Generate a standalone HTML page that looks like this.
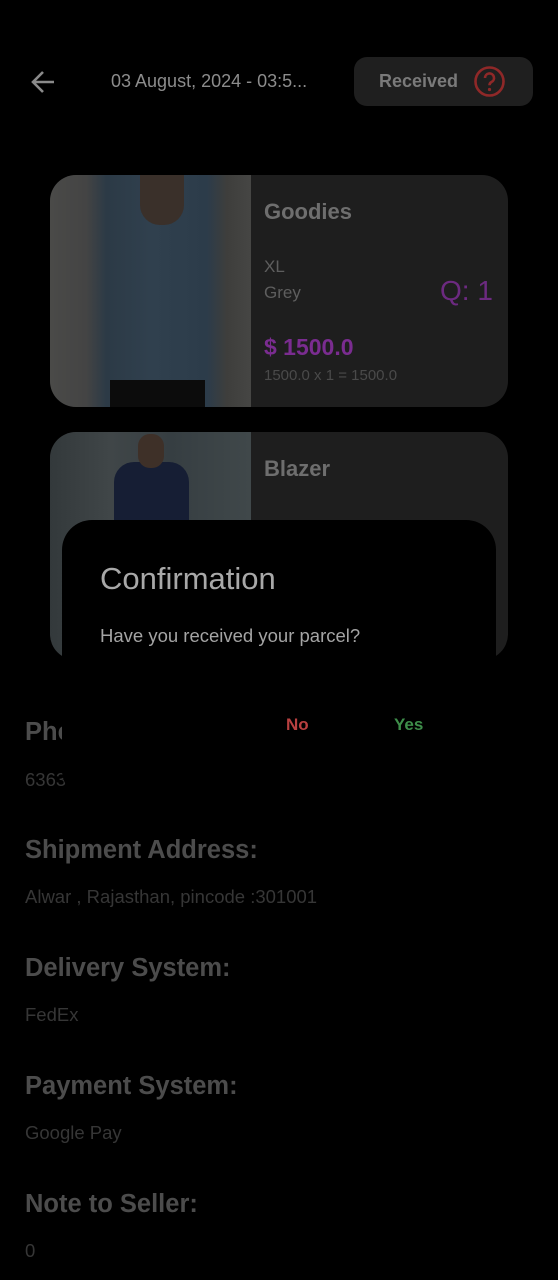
<!DOCTYPE html>
<html><head><meta charset="utf-8"><style>
*{margin:0;padding:0;box-sizing:border-box}
body{width:558px;height:1280px;background:#000;font-family:"Liberation Sans",sans-serif;position:relative;overflow:hidden}
.a{position:absolute;white-space:nowrap}
.card{position:absolute;left:50px;width:458px;background:#1e1e1e;border-radius:26px;overflow:hidden}
.img{position:absolute;left:0;top:0;width:201px;height:100%}
.h{color:#4c4c4c;font-weight:bold;font-size:25.5px;left:25px}
.v{color:#363636;font-size:18.5px;left:25px}
</style></head><body>
<svg class="a" style="left:29px;top:68px" width="28" height="28" viewBox="0 0 28 28"><path d="M25 14H5M14 4L4 14l10 10" stroke="#8a8a8a" stroke-width="2.6" fill="none"/></svg>
<div class="a" style="left:111px;top:71px;color:#8c8c8c;font-size:18px">03 August, 2024 - 03:5...</div>
<div class="a" style="left:354px;top:57px;width:179px;height:49px;background:#1f1f1f;border-radius:13px"></div>
<div class="a" style="left:379px;top:71px;color:#7a7a7a;font-size:18px;font-weight:bold">Received</div>
<svg class="a" style="left:473px;top:65px" width="33" height="33" viewBox="0 0 33 33"><circle cx="16.5" cy="16.5" r="14" stroke="#8f2828" stroke-width="2.6" fill="none"/><path d="M12 13a4.5 4.5 0 1 1 6.5 4c-1.5.8-2 1.6-2 3.2" stroke="#8f2828" stroke-width="2.6" fill="none"/><circle cx="16.5" cy="24.5" r="1.6" fill="#8f2828"/></svg>

<div class="card" style="top:175px;height:232px">
 <div class="img" style="background:linear-gradient(90deg,#4a4a48 0%,#444 18%,#2c3a46 28%,#30404e 50%,#2c3c4a 78%,#3e3e3c 88%,#464644 100%)">
  <div style="position:absolute;left:90px;top:0;width:44px;height:50px;background:#3a302a;border-radius:0 0 20px 20px"></div>
  <div style="position:absolute;left:60px;top:205px;width:95px;height:27px;background:#0c0c0c"></div>
 </div>
 <div class="a" style="left:214px;top:24px;color:#6e6e6e;font-size:22px;font-weight:bold">Goodies</div>
 <div class="a" style="left:214px;top:82px;color:#5e5e5e;font-size:17px">XL</div>
 <div class="a" style="left:214px;top:108px;color:#5e5e5e;font-size:17px">Grey</div>
 <div class="a" style="left:390px;top:100px;color:#6c2a80;font-size:28px">Q: 1</div>
 <div class="a" style="left:214px;top:159px;color:#7a2c90;font-size:23px;font-weight:bold">$ 1500.0</div>
 <div class="a" style="left:214px;top:192px;color:#4a4a4a;font-size:15px">1500.0 x 1 = 1500.0</div>
</div>

<div class="card" style="top:432px;height:228px">
 <div class="img" style="background:linear-gradient(90deg,#33393b 0%,#404648 30%,#363e42 60%,#40484a 100%)">
  <div style="position:absolute;left:64px;top:30px;width:75px;height:200px;background:#161e34;border-radius:20px 20px 0 0"></div>
  <div style="position:absolute;left:88px;top:2px;width:26px;height:34px;background:#3e3028;border-radius:12px"></div>
 </div>
 <div class="a" style="left:214px;top:24px;color:#6e6e6e;font-size:22px;font-weight:bold">Blazer</div>
</div>

<div class="a h" style="top:718px">Phone Number:</div>
<div class="a v" style="top:769px">6363...</div>

<div class="a" style="left:62px;top:520px;width:434px;height:280px;background:#000;border-radius:30px"></div>
<div class="a" style="left:100px;top:561px;color:#a8a8a8;font-size:31px">Confirmation</div>
<div class="a" style="left:100px;top:625px;color:#a4a4a4;font-size:18.5px">Have you received your parcel?</div>
<div class="a" style="left:286px;top:715px;color:#b84040;font-size:17px;font-weight:bold">No</div>
<div class="a" style="left:394px;top:715px;color:#3e8e4a;font-size:17px;font-weight:bold">Yes</div>

<div class="a h" style="top:836px">Shipment Address:</div>
<div class="a v" style="top:886px">Alwar , Rajasthan, pincode :301001</div>
<div class="a h" style="top:954px">Delivery System:</div>
<div class="a v" style="top:1004px">FedEx</div>
<div class="a h" style="top:1072px">Payment System:</div>
<div class="a v" style="top:1122px">Google Pay</div>
<div class="a h" style="top:1190px">Note to Seller:</div>
<div class="a v" style="top:1240px">0</div>
</body></html>
